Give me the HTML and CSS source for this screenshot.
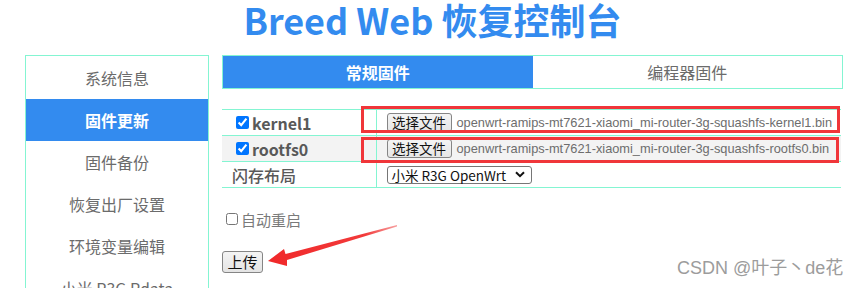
FILE: index.html
```html
<!DOCTYPE html>
<html lang="zh-CN">
<head>
<meta charset="utf-8">
<title>Breed Web 恢复控制台</title>
<link rel="stylesheet" href="styles.css">
</head>
<body>
<h1 class="title">Breed Web 恢复控制台</h1>
<div class="layout">
  <nav class="sidebar">
    <div class="nav-item">系统信息</div>
    <div class="nav-item active">固件更新</div>
    <div class="nav-item">固件备份</div>
    <div class="nav-item">恢复出厂设置</div>
    <div class="nav-item">环境变量编辑</div>
    <div class="nav-item">小米 R3G Rdata</div>
  </nav>
  <main class="main">
    <div class="tabs">
      <div class="tab active">常规固件</div>
      <div class="tab">编程器固件</div>
    </div>
    <table class="fw">
      <colgroup><col class="c-label"><col class="c-value"></colgroup>
      <tr>
        <th><label class="chk"><input type="checkbox" checked>kernel1</label></th>
        <td><span class="file"><span class="filebtn">选择文件</span><span class="fname">openwrt-ramips-mt7621-xiaomi_mi-router-3g-squashfs-kernel1.bin</span></span></td>
      </tr>
      <tr class="alt">
        <th><label class="chk"><input type="checkbox" checked>rootfs0</label></th>
        <td><span class="file"><span class="filebtn">选择文件</span><span class="fname">openwrt-ramips-mt7621-xiaomi_mi-router-3g-squashfs-rootfs0.bin</span></span></td>
      </tr>
      <tr>
        <th class="plain">闪存布局</th>
        <td>
          <div class="select">
            <span class="select-text">小米 R3G OpenWrt</span>
            <svg class="chev" width="10" height="7" viewBox="0 0 10 7"><path d="M1 1.2 L5 5.2 L9 1.2" fill="none" stroke="#111" stroke-width="2"/></svg>
          </div>
        </td>
      </tr>
    </table>
    <label class="reboot"><input type="checkbox">自动重启</label>
    <button class="upload" type="button">上传</button>

    <div class="mark mark-1"></div>
    <div class="mark mark-2"></div>
    <svg class="arrow" width="145" height="50" viewBox="0 0 145 50">
      <defs>
        <linearGradient id="ag" x1="0" y1="0" x2="1" y2="0">
          <stop offset="0" stop-color="#f0282a"/>
          <stop offset="0.75" stop-color="#f23a3a"/>
          <stop offset="1" stop-color="#f7a0a0"/>
        </linearGradient>
      </defs>
      <polygon fill="url(#ag)" points="8,41 24,29 25.5,34 137,5 137,6.5 27,40 27,46"/>
    </svg>
  </main>
</div>
<div class="watermark">CSDN @叶子丶de花</div>
</body>
</html>
```

FILE: styles.css
```css
html, body {
  margin: 0;
  padding: 0;
  background: #ffffff;
  overflow: hidden;
}

body {
  font-family: "Noto Sans CJK SC", "Microsoft YaHei", sans-serif;
  color: #666666;
  height: 288px;
}

.title {
  margin: 0;
  font-size: 36px;
  line-height: 40px;
  font-weight: 700;
  color: #338bef;
  text-align: center;
  margin-top: -1px;
}

.layout {
  display: flex;
  align-items: flex-start;
  gap: 13px;
  padding-left: 25px;
  margin-top: 16px;
}

.sidebar {
  width: 182px;
  border: 1px solid #84f5d2;
  padding-top: 1px;
  flex: none;
}

.nav-item {
  height: 42px;
  line-height: 42px;
  text-align: center;
  font-size: 16px;
  color: #6b6b6b;
}

.nav-item.active {
  background: #338bef;
  color: #ffffff;
  font-weight: 700;
}

.main {
  position: relative;
  width: 621px;
  flex: none;
}

.tabs {
  display: flex;
  border: 1px solid #84f5d2;
  height: 32px;
}

.tab {
  flex: 1;
  text-align: center;
  line-height: 32px;
  font-size: 16px;
  color: #6b6b6b;
}

.tab.active {
  background: #338bef;
  color: #ffffff;
  font-weight: 700;
}

.fw {
  margin-top: 20px;
  width: 619px;
  border-collapse: collapse;
  table-layout: fixed;
}

.c-label {
  width: 154px;
}

.fw tr {
  border-top: 1px solid #84f5d2;
  border-bottom: 1px solid #84f5d2;
}

.fw tr.alt {
  background: #f3f3f3;
}

.fw th,
.fw td {
  height: 25px;
  padding: 0 10px;
  text-align: left;
  vertical-align: middle;
  overflow: visible;
}

.fw th {
  font-size: 16px;
  font-weight: 700;
  color: #595959;
}

.fw th.plain {
  font-weight: 500;
}

.fw td {
  border-left: 1px solid #84f5d2;
}

.chk {
  display: flex;
  align-items: center;
}

.chk input {
  width: 13px;
  height: 13px;
  margin: 0 3px 0 4px;
}

.file {
  display: flex;
  align-items: center;
}

.filebtn {
  display: inline-block;
  flex: none;
  box-sizing: border-box;
  width: 65px;
  height: 19px;
  line-height: 17px;
  border: 1px solid #858585;
  border-radius: 3px;
  background: linear-gradient(#f4f4f4, #e6e6e6);
  color: #111111;
  font-size: 13.5px;
  text-align: center;
}

.fname {
  margin-left: 5px;
  font-family: "Liberation Sans", Arial, sans-serif;
  font-size: 12.8px;
  color: #6d6d6d;
  white-space: nowrap;
}

.select {
  display: flex;
  align-items: center;
  justify-content: space-between;
  box-sizing: border-box;
  width: 145px;
  height: 18px;
  padding: 0 6px 0 4px;
  border: 1px solid #767676;
  border-radius: 3px;
  background: #ffffff;
}

.select-text {
  font-size: 13.5px;
  line-height: 16px;
  color: #111111;
  white-space: nowrap;
}

.chev {
  display: block;
  flex: none;
}

.reboot {
  display: flex;
  align-items: center;
  height: 20px;
  margin-top: 21px;
  font-size: 15px;
  color: #7a7a7a;
}

.reboot input {
  width: 12px;
  height: 12px;
  margin: 0 3px 0 4px;
}

.upload {
  display: block;
  margin-top: 22px;
  box-sizing: border-box;
  width: 41px;
  height: 22px;
  padding: 0;
  font-family: "Noto Sans CJK SC", sans-serif;
  font-size: 15px;
  line-height: 20px;
  color: #111111;
  border: 1px solid #858585;
  border-radius: 3px;
  background: linear-gradient(#f4f4f4, #e4e4e4);
}

.mark {
  position: absolute;
  box-sizing: border-box;
  border: 3px solid #f0363a;
  left: 139px;
}

.mark-1 {
  top: 51px;
  width: 479px;
  height: 27px;
}

.mark-2 {
  top: 82px;
  width: 478px;
  height: 26px;
}

.arrow {
  position: absolute;
  left: 38px;
  top: 165px;
}

.watermark {
  position: absolute;
  left: 677px;
  top: 257px;
  font-family: "Liberation Sans", "Noto Sans CJK SC", sans-serif;
  font-size: 18px;
  line-height: 22px;
  color: #9c9c9c;
  text-shadow: 0 0 1px #ffffff;
}
```
